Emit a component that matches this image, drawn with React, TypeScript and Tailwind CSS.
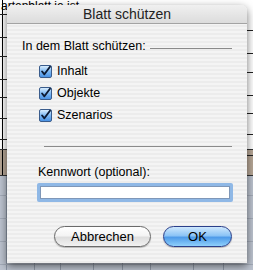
import React from 'react';

const font = { fontFamily: '"Liberation Sans", Arial, sans-serif' };

const Check: React.FC<{ label: string }> = ({ label }) => (
  <div className="flex items-center h-[22px]">
    <div className="w-[13px] h-[13px] rounded-[2px] border border-[#3a5c8c] bg-[linear-gradient(180deg,#d8ecfd_0%,#7db8f3_50%,#4a92e4_100%)] flex items-center justify-center">
      <svg width="13" height="13" viewBox="0 0 13 13">
        <path d="M2.5 6.5 L5.2 9.8 L11.8 0.8" fill="none" stroke="#0c1a33" strokeWidth="2.2" strokeLinecap="round" strokeLinejoin="round" />
      </svg>
    </div>
    <span className="ml-[5px] text-[12.5px] leading-none text-black">{label}</span>
  </div>
);

const Background: React.FC = () => {
  const ticks = [14, 37, 56, 79, 97, 118, 139];
  const cols = [34, 60, 93, 122, 150, 193, 223];
  return (
    <div className="absolute inset-0 bg-white overflow-hidden">
      <div className="absolute left-[1px] top-0 text-[12px] leading-none text-black whitespace-nowrap">artenblatt ie ist</div>
      {/* lower gray area */}
      <div className="absolute left-0 right-0 top-[175px] bottom-0 bg-[#bcc3cf]" />
      {/* tan band */}
      <div className="absolute left-0 right-0 top-[149px] h-[26px] bg-[#b7a796]" />
      {/* left vertical line */}
      <div className="absolute left-[2px] top-0 h-[175px] w-px bg-black" />
      <div className="absolute left-[6px] top-[175px] bottom-0 w-px bg-[#8c96a6]" />
      {ticks.map((y) => (
        <React.Fragment key={y}>
          <div className="absolute left-0 w-[8px] h-px bg-[#222]" style={{ top: y }} />
          <div className="absolute right-0 w-[8px] h-px bg-[#222]" style={{ top: y + 16 }} />
        </React.Fragment>
      ))}
      {[149, 175].map((y) => (
        <div key={y} className="absolute left-0 right-0 h-px bg-[#333]" style={{ top: y }} />
      ))}
      {[195, 218, 241, 264].map((y) => (
        <div key={y} className="absolute left-0 right-0 h-px bg-[#a3abb8]" style={{ top: y }} />
      ))}
      {cols.map((x) => (
        <div key={x} className="absolute top-[262px] bottom-0 w-px bg-[#8f98a6]" style={{ left: x }} />
      ))}
    </div>
  );
};

export default function App() {
  return (
    <div className="relative w-[253px] h-[270px] overflow-hidden" style={font}>
      <Background />
      <div className="relative pt-[5px] pl-[7px]">
        <div className="w-[240px] h-[258px] rounded-t-[6px] overflow-hidden flex flex-col shadow-[0_3px_8px_rgba(0,0,0,0.55)] bg-[repeating-linear-gradient(180deg,#ececec_0px,#ececec_2px,#f4f4f4_2px,#f4f4f4_4px)]">
          {/* title bar */}
          <div className="h-[19px] shrink-0 flex items-center justify-center border-b border-[#a3a3a3] bg-[linear-gradient(180deg,#f0f0f0_0%,#dcdcdc_100%)]">
            <span className="text-[14px] text-[#222] leading-none">Blatt schützen</span>
          </div>
          {/* body */}
          <div className="flex flex-col pl-[15px] pr-[15px]">
            <div className="flex items-center mt-[15px] h-[14px]">
              <span className="text-[12.5px] text-black whitespace-nowrap">In dem Blatt schützen:</span>
              <div className="flex-1 h-px bg-[#8a8a8a] ml-[4px] mt-[5px]" />
            </div>
            <div className="flex flex-col pl-[17px] mt-[7px]">
              <Check label="Inhalt" />
              <Check label="Objekte" />
              <Check label="Szenarios" />
            </div>
            <div className="ml-[22px] mt-[20px] h-px bg-[#8a8a8a]" />
            <div className="ml-[16px] mt-[19px] text-[12.5px] text-black leading-none">Kennwort (optional):</div>
            <div className="ml-[15px] mt-[4px] w-[196px] h-[19px] rounded-[2px] bg-[#8fb8e6] p-[3px]">
              <div className="w-full h-full bg-white border border-[#7f97b8]" />
            </div>
            <div className="flex justify-end gap-[12px] mt-[24px] pr-0">
              <button className="w-[97px] h-[21px] rounded-full border border-[#6a6a6a] bg-[linear-gradient(180deg,#ffffff_0%,#f4f4f4_45%,#dedede_55%,#f2f2f2_100%)] text-[13px] text-black leading-none shadow-[0_1px_1px_rgba(0,0,0,0.25)]">
                Abbrechen
              </button>
              <button className="w-[69px] h-[21px] rounded-full border border-[#2b3f8a] bg-[linear-gradient(180deg,#cfe8fd_0%,#8cc4f6_45%,#4f9be9_55%,#8fd0fb_100%)] text-[13px] text-black leading-none shadow-[0_1px_1px_rgba(0,0,0,0.25)]">
                OK
              </button>
            </div>
          </div>
        </div>
      </div>
    </div>
  );
}
